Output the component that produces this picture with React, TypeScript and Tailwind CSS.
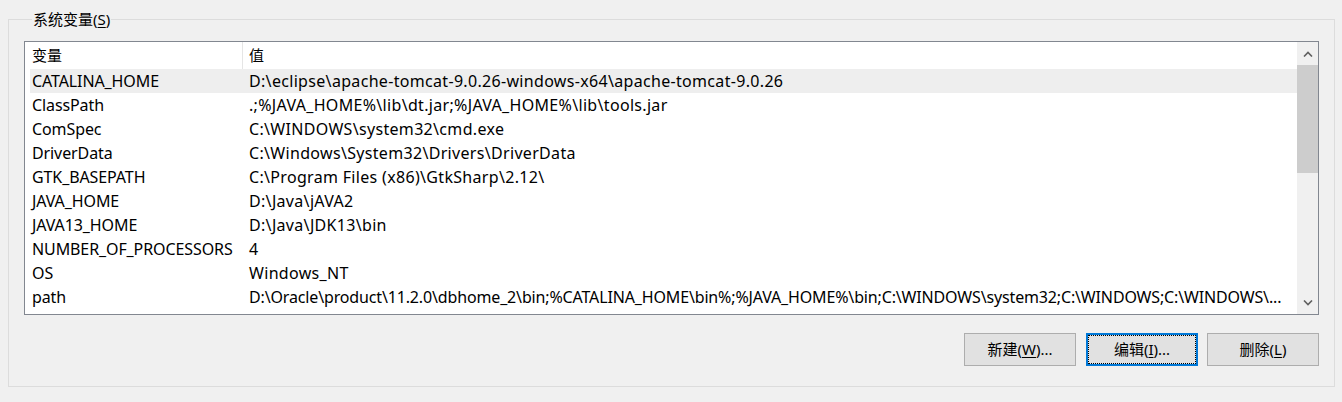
import React from 'react';

type EnvVar = { name: string; value: string };

const vars: EnvVar[] = [
  { name: 'CATALINA_HOME', value: 'D:\\eclipse\\apache-tomcat-9.0.26-windows-x64\\apache-tomcat-9.0.26' },
  { name: 'ClassPath', value: '.;%JAVA_HOME%\\lib\\dt.jar;%JAVA_HOME%\\lib\\tools.jar' },
  { name: 'ComSpec', value: 'C:\\WINDOWS\\system32\\cmd.exe' },
  { name: 'DriverData', value: 'C:\\Windows\\System32\\Drivers\\DriverData' },
  { name: 'GTK_BASEPATH', value: 'C:\\Program Files (x86)\\GtkSharp\\2.12\\' },
  { name: 'JAVA_HOME', value: 'D:\\Java\\jAVA2' },
  { name: 'JAVA13_HOME', value: 'D:\\Java\\JDK13\\bin' },
  { name: 'NUMBER_OF_PROCESSORS', value: '4' },
  { name: 'OS', value: 'Windows_NT' },
  {
    name: 'path',
    value:
      'D:\\Oracle\\product\\11.2.0\\dbhome_2\\bin;%CATALINA_HOME\\bin%;%JAVA_HOME%\\bin;C:\\WINDOWS\\system32;C:\\WINDOWS;C:\\WINDOWS\\...',
  },
];

function Chevron({ up }: { up?: boolean }) {
  return (
    <svg width="10" height="6" viewBox="0 0 10 6" className="text-[#606060]">
      <path
        d={up ? 'M1 5.5 L5 1.5 L9 5.5' : 'M1 0.5 L5 4.5 L9 0.5'}
        fill="none"
        stroke="currentColor"
        strokeWidth="1.6"
      />
    </svg>
  );
}

function Btn({ label, accel, tail, focused }: { label: string; accel: string; tail?: string; focused?: boolean }) {
  const text = (
    <span>
      {label}(<span className="underline underline-offset-2">{accel}</span>){tail}
    </span>
  );
  if (focused) {
    return (
      <button className="w-[112px] h-[33px] border-2 border-[#0078d7] bg-[#e1e1e1] p-0">
        <div className="w-full h-full border border-dotted border-black flex items-center justify-center">{text}</div>
      </button>
    );
  }
  return (
    <button className="w-[112px] h-[33px] border border-[#adadad] bg-[#e1e1e1] flex items-center justify-center">
      {text}
    </button>
  );
}

export default function App() {
  return (
    <div
      className="w-[1342px] h-[402px] bg-[#f0f0f0] pt-[9px] pl-[8px] text-[15px] text-black overflow-hidden"
      style={{ fontFamily: '"Noto Sans", "Noto Sans CJK SC", sans-serif' }}
    >
      <fieldset className="w-[1327px] h-[378px] border border-[#dcdcdc] px-[15px] pt-[12px]">
        <legend className="ml-[8px] px-px leading-[20px]">
          系统变量(<span className="underline underline-offset-2">S</span>)
        </legend>

        <div className="w-[1295px] h-[274px] border border-[#828790] bg-white flex">
          <div className="flex-1 flex flex-col min-w-0">
            <div className="h-[27px] flex items-center shrink-0">
              <div className="w-[218px] h-full border-r border-[#e5e5e5] pl-[7px] flex items-center">变量</div>
              <div className="pl-[6px]">值</div>
            </div>
            {vars.map((v, i) => (
              <div
                key={v.name}
                className={`h-[24px] ml-[5px] flex items-center shrink-0 text-[16px] ${i === 0 ? 'bg-[#eeeeee]' : ''}`}
              >
                <div className="w-[212px] pl-[2px] whitespace-nowrap tracking-[-0.1px]">{v.name}</div>
                <div
                  className={`flex-1 pl-[7px] whitespace-nowrap overflow-hidden ${
                    v.name === 'path' ? 'tracking-[-0.15px]' : 'tracking-[0.32px]'
                  }`}
                >
                  {v.value}
                </div>
              </div>
            ))}
          </div>

          <div className="w-[21px] flex flex-col bg-[#f0f0f0] shrink-0">
            <div className="h-[23px] flex items-center justify-center">
              <Chevron up />
            </div>
            <div className="flex-1">
              <div className="h-[108px] bg-[#cdcdcd]" />
            </div>
            <div className="h-[23px] flex items-center justify-center">
              <Chevron />
            </div>
          </div>
        </div>

        <div className="mt-[18px] flex justify-end">
          <Btn label="新建" accel="W" tail="..." />
          <div className="ml-[10px]">
            <Btn label="编辑" accel="I" tail="..." focused />
          </div>
          <div className="ml-[9px]">
            <Btn label="删除" accel="L" />
          </div>
        </div>
      </fieldset>
    </div>
  );
}
